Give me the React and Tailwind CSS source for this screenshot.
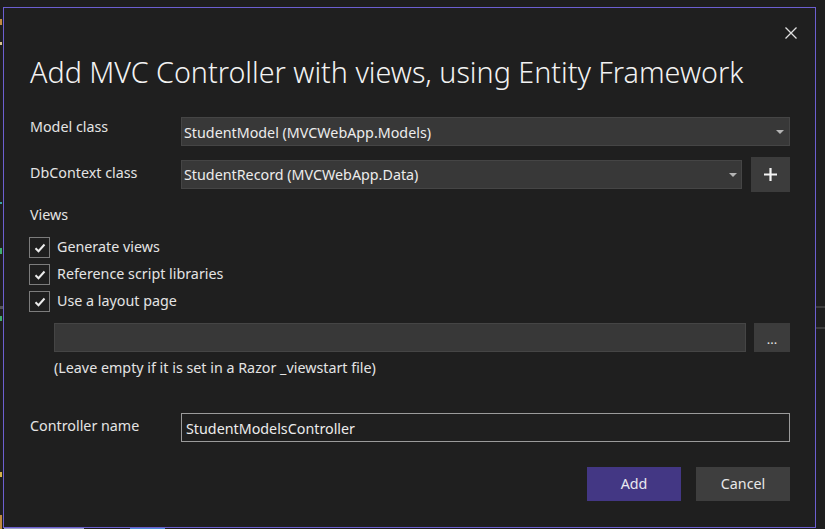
import React from "react";

function Caret({ className }) {
  return (
    <svg className={className} width="8" height="4" viewBox="0 0 8 4">
      <path d="M0 0 L8 0 L4 4 Z" fill="#b4b4b4" />
    </svg>
  );
}

function Check({ label }) {
  return (
    <div className="flex items-center h-[27px]">
      <div className="w-[21px] h-[21px] ml-[-1px] border border-[#7c7c7c] bg-[#1f1f1f] flex items-center justify-center">
        <svg width="12" height="10" viewBox="0 0 12 10">
          <path d="M1.5 5.2 L4.5 8.2 L10.5 1.5" fill="none" stroke="#ececec" strokeWidth="2" />
        </svg>
      </div>
      <span className="ml-[7px] text-[14.3px] leading-[20px] text-[#e4e4e4] mt-[-1px]">{label}</span>
    </div>
  );
}

export default function App() {
  return (
    <div className="relative w-[825px] h-[529px] overflow-hidden bg-[#1e1e1e] pt-[7px] pl-[3px] font-['Noto_Sans','Open_Sans',sans-serif]">
      {/* background editor fragments */}
      <div className="absolute left-[816px] top-[306px] w-[9px] h-[2px] bg-[#3c3c3c]" />
      <div className="absolute left-[816px] top-[327px] w-[9px] h-[2px] bg-[#3c3c3c]" />
      <div className="absolute left-0 top-[19px] w-[2px] h-[6px] bg-[#c08a3e]" />
      <div className="absolute left-0 top-[42px] w-[2px] h-[3px] bg-[#d9c48f]" />
      <div className="absolute left-0 top-[202px] w-[2px] h-[2px] bg-[#3aa3a3]" />
      <div className="absolute left-0 top-[248px] w-[2px] h-[6px] bg-[#3fae6e]" />
      <div className="absolute left-0 top-[306px] w-[3px] h-[3px] bg-[#555]" />
      <div className="absolute left-0 top-[316px] w-[2px] h-[5px] bg-[#3fae6e]" />
      <div className="absolute left-0 top-[472px] w-[2px] h-[5px] bg-[#d4b14a]" />
      <div className="absolute left-0 top-[515px] w-[2px] h-[14px] bg-[#c08a3e]" />
      <div className="absolute left-[4px] top-[528px] w-[80px] h-[1px] bg-[#9aa0c8]" />
      <div className="absolute left-[130px] top-[528px] w-[35px] h-[1px] bg-[#4f8ad8]" />

      <div className="relative w-[813px] h-[521px] border border-[#6c5fd0] bg-[#1f1f1f] flex flex-col pl-[26px] pr-[25px] text-[#e4e4e4]">
        <div className="h-[44px] flex justify-end items-start pt-[19px] mr-[-7px]">
          <svg width="12" height="12" viewBox="0 0 12 12">
            <path d="M0.5 0.5 L11.5 11.5 M11.5 0.5 L0.5 11.5" stroke="#e0e0e0" strokeWidth="1.3" />
          </svg>
        </div>
        <div className="h-[40px] leading-[40px] text-[28.7px] font-light text-[#f2f2f2] whitespace-nowrap">
          Add MVC Controller with views, using Entity Framework
        </div>

        <div className="mt-[25px] flex items-start">
          <div className="w-[151px] text-[14.3px] leading-[20px]">Model class</div>
          <div className="w-[609px] h-[29px] bg-[#383838] border border-[#454545] flex items-center pl-[2px] pr-[5px]">
            <span className="flex-1 text-[14.3px] text-[#ececec] leading-[20px] mt-[2px]">StudentModel (MVCWebApp.Models)</span>
            <Caret />
          </div>
        </div>

        <div className="mt-[11px] flex items-center h-[35px]">
          <div className="w-[151px] text-[14.3px] leading-[20px] mt-[-3px]">DbContext class</div>
          <div className="w-[561px] h-[29px] bg-[#383838] border border-[#454545] flex items-center pl-[2px] pr-[4px]">
            <span className="flex-1 text-[14.3px] text-[#ececec] leading-[20px]">StudentRecord (MVCWebApp.Data)</span>
            <Caret />
          </div>
          <div className="ml-[9px] w-[39px] h-[35px] bg-[#3c3c3c] flex items-center justify-center">
            <svg width="13" height="13" viewBox="0 0 13 13">
              <path d="M6.5 0 V13 M0 6.5 H13" stroke="#f4f4f4" strokeWidth="2.2" />
            </svg>
          </div>
        </div>

        <div className="mt-[13px] h-[20px] text-[14.3px] leading-[20px]">Views</div>

        <div className="mt-[9px] flex flex-col">
          <Check label="Generate views" />
          <Check label="Reference script libraries" />
          <Check label="Use a layout page" />
        </div>

        <div className="mt-[8px] pl-[24px] flex">
          <div className="w-[692px] h-[29px] bg-[#383838] border border-[#454545]" />
          <div className="ml-[8px] w-[36px] h-[29px] bg-[#3c3c3c] flex items-center justify-center text-[13px] leading-[20px] text-[#e4e4e4] pt-[2px]">
            ...
          </div>
        </div>

        <div className="mt-[6px] pl-[24px] h-[20px] text-[14.3px] leading-[20px]">
          (Leave empty if it is set in a Razor _viewstart file)
        </div>

        <div className="mt-[35px] flex items-center">
          <div className="w-[151px] text-[14.3px] leading-[20px] mt-[-4px]">Controller name</div>
          <div className="w-[609px] h-[29px] border border-[#9b9b9b] bg-[#1f1f1f] flex items-center pl-[4px]">
            <span className="text-[14.3px] text-[#ececec] leading-[20px] mt-[2px]">StudentModelsController</span>
          </div>
        </div>

        <div className="mt-[25px] flex justify-end gap-[15px]">
          <div className="w-[94px] h-[34px] bg-[#433784] flex items-center justify-center text-[14.3px] text-[#e8e8f0]">Add</div>
          <div className="w-[94px] h-[34px] bg-[#3e3e3e] flex items-center justify-center text-[14.3px] text-[#e8e8e8]">Cancel</div>
        </div>
      </div>
    </div>
  );
}
